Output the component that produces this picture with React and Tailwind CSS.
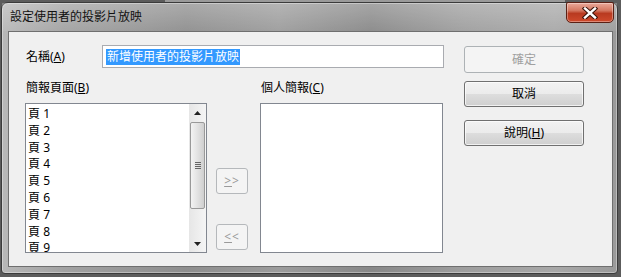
export default function App() {
  const pages = [1, 2, 3, 4, 5, 6, 7, 8, 9];
  const font = "font-['Noto_Sans','Noto_Sans_CJK_TC',sans-serif]";

  return (
    <div className={`w-[621px] h-[277px] overflow-hidden relative bg-[#5c5c5c] ${font} text-[12px] text-black`}>
      {/* window behind (top sliver) */}
      <div className="absolute left-[165px] top-0 w-[400px] h-[3px] bg-[#9a9a9a]" />

      {/* dialog window */}
      <div className="absolute left-[1px] top-[2px] w-[617px] h-[272px] rounded-t-[7px] rounded-b-[4px] border border-[#3b3b3b] bg-[linear-gradient(90deg,#b8b8b8_0%,#a2a2a2_10%,#8e8e8e_30%,#9c9c9c_45%,#888_60%,#9e9e9e_75%,#a8a8a8_90%,#9a9a9a_100%)] shadow-[inset_0_0_0_1px_rgba(255,255,255,0.35)]">
        {/* title bar */}
        <div className="h-[28px] flex items-center pl-[8px] text-[12px] text-[#111] bg-[linear-gradient(180deg,rgba(255,255,255,0.25),rgba(255,255,255,0.05))]">
          設定使用者的投影片放映
        </div>

        {/* close button */}
        <div className="absolute right-[3px] top-[-1px] w-[48px] h-[21px] rounded-b-[5px] rounded-t-[2px] border border-[#5b2014] bg-[linear-gradient(180deg,#e9a99a_0%,#d3765f_40%,#b93a20_55%,#cf4a2c_100%)] flex items-center justify-center shadow-[inset_0_0_0_1px_rgba(255,255,255,0.35)]">
          <svg width="16" height="12" viewBox="0 0 16 12">
            <path d="M3 1.5 L13 10.5 M13 1.5 L3 10.5" stroke="#3a1208" strokeWidth="4.5" strokeLinecap="square" />
            <path d="M3 1.5 L13 10.5 M13 1.5 L3 10.5" stroke="#ffffff" strokeWidth="2.4" strokeLinecap="square" />
          </svg>
        </div>

        {/* content */}
        <div className="ml-[6px] w-[605px] h-[236px] border border-[#6f6f6f] bg-[#f0f0f0] flex pl-[16px] pt-[13px]">
          {/* main area */}
          <div className="w-[419px] flex flex-col">
            <div className="flex items-center h-[23px]">
              <div className="w-[77px] pl-[1px] leading-none">
                名稱(<span className="underline">A</span>)
              </div>
              <div className="w-[342px] h-[23px] border border-[#a9abb0] bg-white flex items-center pl-[3px]">
                <span className="bg-[#3399ff] text-white h-[16px] leading-[16px] px-[1px]">新增使用者的投影片放映</span>
              </div>
            </div>

            <div className="flex h-[35px] pt-[13px] leading-[14px]">
              <div className="w-[235px] pl-[1px]">
                簡報頁面(<span className="underline">B</span>)
              </div>
              <div className="pl-[1px]">
                個人簡報(<span className="underline">C</span>)
              </div>
            </div>

            <div className="flex h-[150px]">
              {/* left list */}
              <div className="w-[182px] h-[150px] border border-[#828790] bg-white flex">
                <div className="flex-1 pl-[2px] pt-[2px] overflow-hidden">
                  {pages.map((p) => (
                    <div key={p} className="h-[16.8px] leading-[16.8px]">
                      頁 {p}
                    </div>
                  ))}
                </div>
                <div className="w-[17px] h-full flex flex-col bg-[linear-gradient(90deg,#e6e6e6,#f5f5f5)]">
                  <div className="h-[17px] flex items-center justify-center">
                    <svg width="7" height="4" viewBox="0 0 7 4">
                      <path d="M0 4 L3.5 0 L7 4 Z" fill="#222" />
                    </svg>
                  </div>
                  <div className="mx-[1px] mt-[1px] h-[87px] rounded-[2px] border border-[#999] bg-[linear-gradient(90deg,#f3f3f3,#e2e2e2_50%,#cfcfcf)] flex flex-col items-center justify-center gap-[1px]">
                    <div className="w-[6px] h-[1px] bg-[#666]" />
                    <div className="w-[6px] h-[1px] bg-[#666]" />
                    <div className="w-[6px] h-[1px] bg-[#666]" />
                    <div className="w-[6px] h-[1px] bg-[#666]" />
                  </div>
                  <div className="flex-1" />
                  <div className="h-[17px] flex items-center justify-center">
                    <svg width="7" height="4" viewBox="0 0 7 4">
                      <path d="M0 0 L7 0 L3.5 4 Z" fill="#222" />
                    </svg>
                  </div>
                </div>
              </div>

              {/* move buttons */}
              <div className="w-[53px] pl-[9px] pt-[65px] flex flex-col">
                <div className="w-[32px] h-[26px] rounded-[3px] border border-[#b5b8bb] bg-[#f4f4f4] flex items-center justify-center text-[12px] text-[#9a9a9a] tracking-[1px]">
                  <span className="underline">&gt;</span>&gt;
                </div>
                <div className="mt-[30px] w-[32px] h-[26px] rounded-[3px] border border-[#b5b8bb] bg-[#f4f4f4] flex items-center justify-center text-[12px] text-[#9a9a9a] tracking-[1px]">
                  <span className="underline">&lt;</span>&lt;
                </div>
              </div>

              {/* right list */}
              <div className="w-[183px] h-[150px] border border-[#828790] bg-white" />
            </div>
          </div>

          {/* button column */}
          <div className="ml-[20px] w-[120px] flex flex-col pt-[1px]">
            <div className="h-[27px] rounded-[3px] border border-[#adb2b5] bg-[#f4f4f4] flex items-center justify-center text-[#a0a0a0]">
              確定
            </div>
            <div className="mt-[8px] h-[26px] rounded-[3px] border border-[#707070] bg-[linear-gradient(180deg,#f2f2f2_0%,#ebebeb_50%,#dddddd_51%,#cfcfcf_100%)] flex items-center justify-center shadow-[inset_0_0_0_1px_rgba(255,255,255,0.7)]">
              取消
            </div>
            <div className="mt-[13px] h-[26px] rounded-[3px] border border-[#707070] bg-[linear-gradient(180deg,#f2f2f2_0%,#ebebeb_50%,#dddddd_51%,#cfcfcf_100%)] flex items-center justify-center shadow-[inset_0_0_0_1px_rgba(255,255,255,0.7)]">
              說明(<span className="underline">H</span>)
            </div>
          </div>
        </div>
      </div>
    </div>
  );
}
